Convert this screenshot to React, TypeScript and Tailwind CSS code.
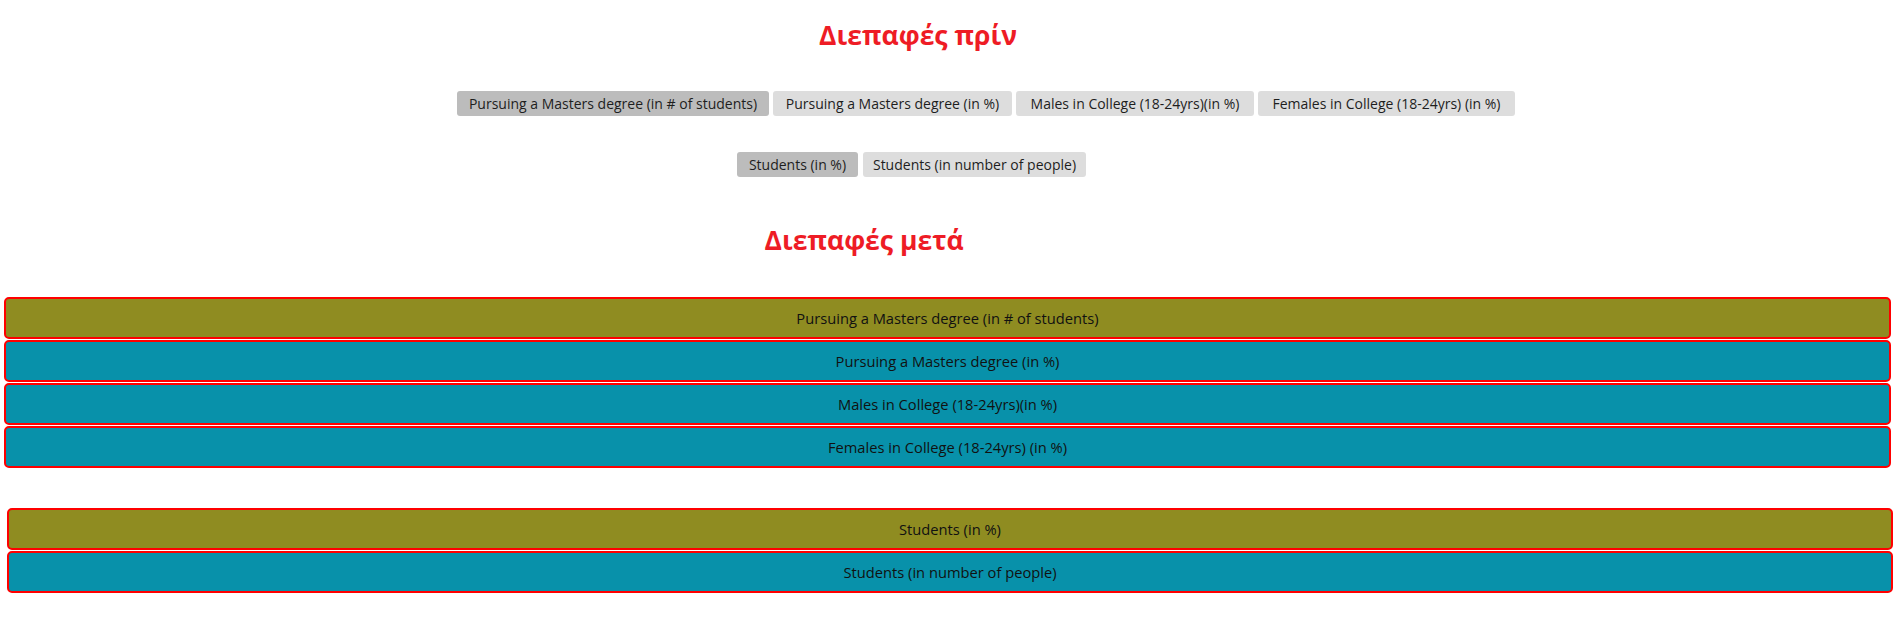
import React from "react";

const topButtons = [
  { label: "Pursuing a Masters degree (in # of students)", w: "w-[312px]", active: true },
  { label: "Pursuing a Masters degree (in %)", w: "w-[239px]", active: false },
  { label: "Males in College (18-24yrs)(in %)", w: "w-[238px]", active: false },
  { label: "Females in College (18-24yrs) (in %)", w: "w-[257px]", active: false },
];

const bottomButtons = [
  { label: "Students (in %)", w: "w-[121px]", active: true },
  { label: "Students (in number of people)", w: "w-[223px]", active: false },
];

function Btn({ label, w, active }: { label: string; w: string; active: boolean }) {
  return (
    <div
      className={`${w} h-[25px] flex items-center justify-center rounded-[3px] text-[14px] text-[#1e1e1e] whitespace-nowrap ${
        active ? "bg-[#bcbcbc]" : "bg-[#dddddd]"
      }`}
    >
      {label}
    </div>
  );
}

function Bar({ label, active }: { label: string; active: boolean }) {
  return (
    <div
      className={`h-[42px] border-2 border-[#ff0000] rounded-[5px] flex items-center justify-center text-[14.7px] text-[#111] ${
        active ? "bg-[#8f8c21]" : "bg-[#0891aa]"
      }`}
    >
      {label}
    </div>
  );
}

export default function App() {
  return (
    <div className="w-[1901px] h-[641px] bg-white font-['Open_Sans',sans-serif]">
      <div className="pt-[16px] flex justify-center pr-[65px]">
        <h1 className="text-[26.5px] font-bold text-[#ee1c25] leading-[38px]">Διεπαφές πρίν</h1>
      </div>
      <div className="mt-[37px] pl-[457px] flex gap-[4px]">
        {topButtons.map((b) => (
          <Btn key={b.label} {...b} />
        ))}
      </div>
      <div className="mt-[36px] pl-[737px] flex gap-[5px]">
        {bottomButtons.map((b) => (
          <Btn key={b.label} {...b} />
        ))}
      </div>
      <div className="mt-[44px] flex justify-center pr-[173px]">
        <h2 className="text-[26.5px] font-bold text-[#ee1c25] leading-[38px]">Διεπαφές μετά</h2>
      </div>
      <div className="mt-[38px] ml-[4px] w-[1887px] flex flex-col gap-[1px]">
        <Bar label="Pursuing a Masters degree (in # of students)" active />
        <Bar label="Pursuing a Masters degree (in %)" active={false} />
        <Bar label="Males in College (18-24yrs)(in %)" active={false} />
        <Bar label="Females in College (18-24yrs) (in %)" active={false} />
      </div>
      <div className="mt-[40px] ml-[7px] w-[1886px] flex flex-col gap-[1px]">
        <Bar label="Students (in %)" active />
        <Bar label="Students (in number of people)" active={false} />
      </div>
    </div>
  );
}
